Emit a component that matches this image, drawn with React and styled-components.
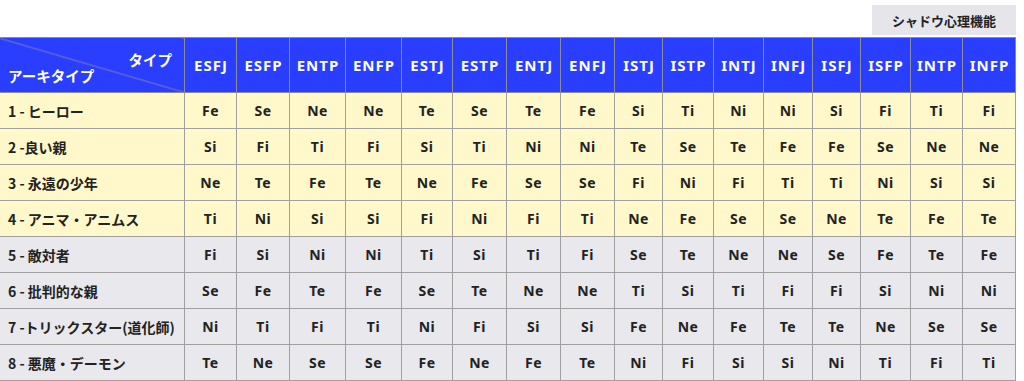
import React from "react";
import styled, { createGlobalStyle } from "styled-components";

const Global = createGlobalStyle`
  html, body { margin: 0; padding: 0; background: #fff; }
  body { font-family: "Noto Sans", "Noto Sans CJK JP", sans-serif; color: #222; }
`;

const Page = styled.div`
  width: 1016px;
  padding: 5px 8px 0 0;
  display: flex;
  flex-direction: column;
  align-items: flex-end;
  gap: 2px;
`;

const TabButton = styled.button`
  width: 144px;
  height: 30px;
  border: none;
  background: #e6e6ea;
  font-family: "Noto Sans CJK JP", "Noto Sans", sans-serif;
  font-weight: 700;
  font-size: 13px;
  color: #222;
  padding: 0;
`;

const Table = styled.table`
  width: 1016px;
  border-collapse: collapse;
  table-layout: fixed;
`;

const Col = styled.col`
  width: ${(p) => p.$w}px;
`;

const HeadRow = styled.tr`
  height: 55px;
  background: #2a3eff;
`;

const Corner = styled.th`
  position: relative;
  padding: 0;
  border: 1px solid #8a8a9a;
  background: linear-gradient(
    to top right,
    transparent calc(50% - 0.8px),
    #8a8a9a 50%,
    transparent calc(50% + 0.8px)
  );
  color: #fff;
  font-family: "Noto Sans CJK JP", sans-serif;
  font-weight: 700;
  font-size: 14.5px;
`;

const CornerTop = styled.span`
  position: absolute;
  right: 12px;
  top: 15px;
  line-height: 1;
`;

const CornerBottom = styled.span`
  position: absolute;
  left: 8px;
  bottom: 9px;
  line-height: 1;
`;

const TypeHead = styled.th`
  border: 1px solid #8a8a9a;
  color: #fff;
  font-weight: 700;
  font-size: 15px;
  letter-spacing: 1px;
  padding: 0 0 0 1px;
  text-align: center;
`;

const Row = styled.tr`
  height: 36px;
  background: ${(p) => (p.$tone === "gray" ? "#e8e8ed" : "#fff8cb")};
`;

const Label = styled.td`
  border: 1px solid #a0a0a0;
  padding: 0 0 0 8px;
  font-family: "Noto Sans CJK JP", "Noto Sans", sans-serif;
  font-weight: 700;
  font-size: 14px;
  white-space: nowrap;
  color: #222;
`;

const Cell = styled.td`
  border: 1px solid #a0a0a0;
  padding: 0;
  text-align: center;
  font-weight: 700;
  font-size: 14px;
  letter-spacing: 0.5px;
  color: #222;
`;

const types = ["ESFJ","ESFP","ENTP","ENFP","ESTJ","ESTP","ENTJ","ENFJ","ISTJ","ISTP","INTJ","INFJ","ISFJ","ISFP","INTP","INFP"];
const widths = [52,53,56,56,51,54,54,54,48,51,50,49,48,50,52,53];

const rows = [
  ["1 - ヒーロー", "Fe Se Ne Ne Te Se Te Fe Si Ti Ni Ni Si Fi Ti Fi"],
  ["2 -良い親", "Si Fi Ti Fi Si Ti Ni Ni Te Se Te Fe Fe Se Ne Ne"],
  ["3 - 永遠の少年", "Ne Te Fe Te Ne Fe Se Se Fi Ni Fi Ti Ti Ni Si Si"],
  ["4 - アニマ・アニムス", "Ti Ni Si Si Fi Ni Fi Ti Ne Fe Se Se Ne Te Fe Te"],
  ["5 - 敵対者", "Fi Si Ni Ni Ti Si Ti Fi Se Te Ne Ne Se Fe Te Fe"],
  ["6 - 批判的な親", "Se Fe Te Fe Se Te Ne Ne Ti Si Ti Fi Fi Si Ni Ni"],
  ["7 -トリックスター(道化師)", "Ni Ti Fi Ti Ni Fi Si Si Fe Ne Fe Te Te Ne Se Se"],
  ["8 - 悪魔・デーモン", "Te Ne Se Se Fe Ne Fe Te Ni Fi Si Si Ni Ti Fi Ti"],
];

export default function App() {
  return (
    <>
      <Global />
      <Page>
        <TabButton>シャドウ心理機能</TabButton>
        <Table>
          <colgroup>
            <Col $w={185} />
            {widths.map((w, i) => <Col key={i} $w={w} />)}
          </colgroup>
          <thead>
            <HeadRow>
              <Corner>
                <CornerTop>タイプ</CornerTop>
                <CornerBottom>アーキタイプ</CornerBottom>
              </Corner>
              {types.map((t) => <TypeHead key={t}>{t}</TypeHead>)}
            </HeadRow>
          </thead>
          <tbody>
            {rows.map(([label, vals], i) => (
              <Row key={label} $tone={i < 4 ? "yellow" : "gray"}>
                <Label>{label}</Label>
                {vals.split(" ").map((v, j) => <Cell key={j}>{v}</Cell>)}
              </Row>
            ))}
          </tbody>
        </Table>
      </Page>
    </>
  );
}
